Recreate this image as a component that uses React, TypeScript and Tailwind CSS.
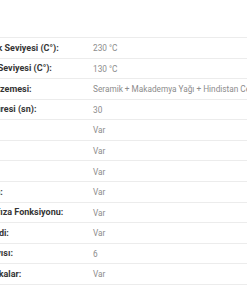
import React from "react";

const rows = [
  { label: "Maksimum Sıcaklık Seviyesi (C°):", value: "230 °C" },
  { label: "Minimum Sıcaklık Seviyesi (C°):", value: "130 °C" },
  { label: "Isıtıcı Plakanın Malzemesi:", value: "Seramik + Makademya Yağı + Hindistan Cevizi Yağı" },
  { label: "Plakanın Isınma Süresi (sn):", value: "30" },
  { label: "İyonik:", value: "Var" },
  { label: "LCD Ekran:", value: "Var" },
  { label: "Döner Kablo:", value: "Var" },
  { label: "Otomatik Kapanma:", value: "Var" },
  { label: "Sıcaklık Değeri Hafıza Fonksiyonu:", value: "Var" },
  { label: "Sıcaklık Seviye Kilidi:", value: "Var" },
  { label: "Sıcaklık Seviye Sayısı:", value: "6" },
  { label: "Yüzen Seramik Plakalar:", value: "Var" },
];

export default function App() {
  return (
    <div className="w-[247px] h-[296px] overflow-hidden bg-white font-['Roboto',sans-serif]">
      <div className="pt-[37px] ml-[-77px]">
        <div className="border-t border-[#ececec]">
          {rows.map((row, index) => (
            <div
              key={index}
              className="flex items-center pt-px h-[20.58px] border-b border-[#ececec] whitespace-nowrap"
            >
              <div className="w-[170px] shrink-0 text-[9px] font-bold text-[#353535]">
                {row.label}
              </div>
              <div className="text-[8.25px] text-[#8c8c8c]">{row.value}</div>
            </div>
          ))}
        </div>
      </div>
    </div>
  );
}
